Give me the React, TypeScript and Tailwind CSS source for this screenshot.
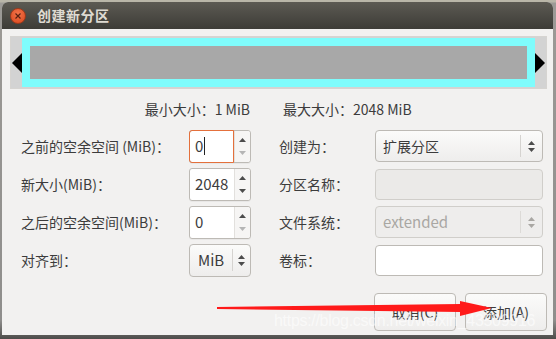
import React from "react";

const font = { fontFamily: '"Noto Sans CJK SC", "Noto Sans", sans-serif' };

function SpinArrows({ downDisabled = true, upDisabled = false }: { downDisabled?: boolean; upDisabled?: boolean }) {
  return (
    <div className="flex flex-col items-center justify-center gap-[9px] w-[15px]">
      <svg width="7" height="4" viewBox="0 0 7 4"><path d="M0 4 L3.5 0 L7 4 Z" fill={upDisabled ? "#b5b5b5" : "#4c4c4c"} /></svg>
      <svg width="7" height="4" viewBox="0 0 7 4"><path d="M0 0 L3.5 4 L7 0 Z" fill={downDisabled ? "#b5b5b5" : "#4c4c4c"} /></svg>
    </div>
  );
}

function ComboArrows({ color = "#4c4c4c" }: { color?: string }) {
  return (
    <div className="flex flex-col items-center justify-center gap-[3px]">
      <svg width="7" height="4" viewBox="0 0 7 4"><path d="M0 4 L3.5 0 L7 4 Z" fill={color} /></svg>
      <svg width="7" height="4" viewBox="0 0 7 4"><path d="M0 0 L3.5 4 L7 0 Z" fill={color} /></svg>
    </div>
  );
}

function Spin({ value, focused = false, downDisabled = true }: { value: string; focused?: boolean; downDisabled?: boolean }) {
  return (
    <div className="flex h-[33px] w-[62px] rounded-[3px] border border-[#bdbab5] bg-white shadow-[0_1px_0_rgba(0,0,0,0.04)]">
      <div
        className={
          "flex items-center flex-1 pl-[5px] text-[15px] text-[#3c3c3c] " +
          (focused ? "border border-[#e4703c] rounded-l-[3px] -m-px mr-0" : "")
        }
      >
        {value}
        {focused && <span className="ml-px inline-block h-[18px] w-px bg-[#222]" />}
      </div>
      <div className="flex items-center justify-center bg-[#f6f5f4] rounded-r-[3px] border-l border-[#e2e0dd]">
        <SpinArrows downDisabled={downDisabled} />
      </div>
    </div>
  );
}

export default function App() {
  return (
    <div className="w-[556px] h-[339px] overflow-hidden relative bg-[linear-gradient(180deg,#b9b6a8_0px,#b9b6a8_2px,#9c9a96_3px,#8f8e8c_320px,#4d4c4a_339px)]" style={font}>
      <div className="ml-[2px] mt-[2px] w-[551px] h-[333px] rounded-t-[6px] overflow-hidden bg-[#f2f1f0] flex flex-col">
        {/* title bar */}
        <div className="h-[27px] shrink-0 bg-[linear-gradient(180deg,#5c5a53,#3d3c37)] flex items-center pl-[8px]">
          <div className="w-[16px] h-[16px] rounded-full bg-[radial-gradient(circle_at_50%_35%,#f3744a,#d9461c)] border border-[#9d3a1c] flex items-center justify-center">
            <svg width="6" height="6" viewBox="0 0 6 6"><path d="M0.5 0.5 L5.5 5.5 M5.5 0.5 L0.5 5.5" stroke="#5a2010" strokeWidth="1.2" /></svg>
          </div>
          <span className="ml-[11px] text-[14px] font-bold text-[#dfdbd2] tracking-[0.5px]">创建新分区</span>
        </div>

        {/* partition bar */}
        <div className="mt-[7px] ml-[8px] w-[537px] h-[53px] border border-[#d6d4d1] bg-[#d3d3d3] flex p-px">
          <div className="w-[10px] flex items-center">
            <svg width="10" height="20" viewBox="0 0 10 20"><path d="M0 10 L10 0 L10 20 Z" fill="#000" /></svg>
          </div>
          <div className="flex-1 bg-[#7ffcfc] p-[8px]">
            <div className="w-full h-full bg-[#a8a8a8]" />
          </div>
          <div className="w-[10px] flex items-center">
            <svg width="10" height="20" viewBox="0 0 10 20"><path d="M10 10 L0 0 L0 20 Z" fill="#000" /></svg>
          </div>
        </div>

        {/* min / max */}
        <div className="flex mt-[9px] h-[22px] items-center text-[14px] text-[#3c3c3c]">
          <div className="w-[248px] text-right">最小大小：1 MiB</div>
          <div className="ml-[33px]">最大大小：2048 MiB</div>
        </div>

        {/* form */}
        <div className="flex mt-[9px]">
          <div className="ml-[19px] w-[231px] grid grid-cols-[168px_62px] grid-rows-[34px_34px_34px_34px] gap-y-[4px] items-center text-[14px] text-[#3c3c3c]">
            <span>之前的空余空间 (MiB)：</span>
            <Spin value="0" focused />
            <span>新大小(MiB)：</span>
            <Spin value="2048" downDisabled={false} />
            <span>之后的空余空间(MiB)：</span>
            <Spin value="0" />
            <span>对齐到：</span>
            <div className="flex h-[33px] w-[62px] items-center rounded-[4px] border border-[#bdbab5] bg-[linear-gradient(180deg,#fbfbfa,#eeedec)] pl-[8px] pr-[5px] text-[15px]">
              <span className="flex-1">MiB</span>
              <div className="h-[22px] w-px bg-[#d5d3d0] mr-[5px]" />
              <ComboArrows />
            </div>
          </div>

          <div className="ml-[27px] w-[265px] grid grid-cols-[96px_168px] grid-rows-[34px_34px_34px_34px] gap-y-[4px] items-center text-[14px] text-[#3c3c3c]">
            <span>创建为：</span>
            <div className="flex h-[32px] items-center rounded-[4px] border border-[#bdbab5] bg-[linear-gradient(180deg,#fbfbfa,#eeedec)] pl-[7px] pr-[7px]">
              <span className="flex-1">扩展分区</span>
              <div className="h-[22px] w-px bg-[#d5d3d0] mr-[7px]" />
              <ComboArrows />
            </div>
            <span>分区名称：</span>
            <div className="h-[31px] rounded-[4px] border border-[#d0ceca] bg-[#ebeae8]" />
            <span>文件系统：</span>
            <div className="flex h-[32px] items-center rounded-[4px] border border-[#d0ceca] bg-[#eeedec] pl-[7px] pr-[7px] text-[15px] text-[#a9a7a3]">
              <span className="flex-1">extended</span>
              <div className="h-[22px] w-px bg-[#dcdad7] mr-[7px]" />
              <ComboArrows color="#a9a7a3" />
            </div>
            <span>卷标：</span>
            <div className="h-[31px] rounded-[4px] border border-[#bdbab5] bg-white" />
          </div>
        </div>

        {/* buttons */}
        <div className="flex mt-[16px] ml-[372px] gap-[9px]">
          <div className="w-[82px] h-[38px] rounded-[4px] border border-[#bdbab5] bg-[linear-gradient(180deg,#fbfbfa,#eeedec)] flex items-center justify-center text-[14px] text-[#3c3c3c]">取消(C)</div>
          <div className="w-[82px] h-[38px] rounded-[4px] border border-[#bdbab5] bg-[linear-gradient(180deg,#fbfbfa,#eeedec)] flex items-center justify-center text-[14px] text-[#3c3c3c]">添加(A)</div>
        </div>
      </div>

      {/* red arrow annotation */}
      <svg className="absolute left-0 top-0 pointer-events-none" width="556" height="339" viewBox="0 0 556 339">
        <path d="M217 307 L460 304 L460 301 L492 308 L460 316 L460 312 L217 309 Z" fill="#ff1a1a" />
      </svg>

      {/* watermark */}
      <div className="absolute left-[274px] top-[309px] text-[16px] text-white/60 tracking-[-0.3px] whitespace-nowrap pointer-events-none" style={{ fontFamily: '"Liberation Sans", sans-serif' }}>
        https://blog.csdn.net/weixin_43509916
      </div>
    </div>
  );
}
